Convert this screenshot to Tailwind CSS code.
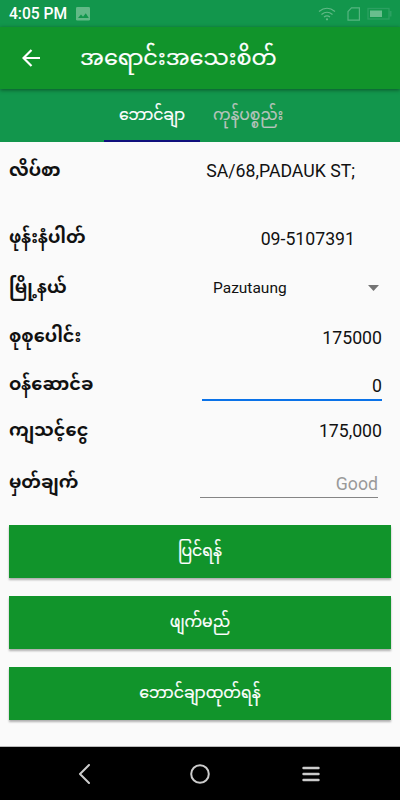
<!DOCTYPE html>
<html lang="my">
<head>
<meta charset="utf-8">
<meta name="viewport" content="width=device-width">
<title>အရောင်းအသေးစိတ်</title>
<script src="https://cdn.jsdelivr.net/npm/@tailwindcss/browser@4"></script>
</head>
<body class="w-[400px] h-[800px] overflow-hidden flex flex-col bg-[#fafafa] font-[Roboto,'Noto_Sans_Myanmar',sans-serif] text-[#111]">
  <!-- Status bar -->
  <div class="h-[27px] shrink-0 bg-[#12964c] flex items-center pl-[9px] pr-[8px] text-white">
    <span class="text-[15.6px] font-medium leading-[28px] w-[59px] whitespace-nowrap pt-px">4:05 PM</span>
    <svg class="ml-2 w-[14px] h-[14px]" viewBox="0 0 14 14"><rect width="14" height="13.5" rx="1.3" fill="#62b987"/><path d="M2 11 5 7.5l2 2.2 2.8-3.5 3 4.8z" fill="#12964c"/></svg>
    <svg class="ml-auto w-[18px] h-[14px]" viewBox="0 0 18 14" fill="none" stroke="#62b987" stroke-width="1.2"><path d="M1 4.5q8-6.500 16 0M3.500 7.500q5.500-4.500 11 0M6 10q3-2.300 6 0"/><circle cx="9" cy="12.300" r="1.100" fill="#62b987" stroke="none"/></svg>
    <svg class="ml-[11px] w-[14px] h-[14px]" viewBox="0 0 14 14" fill="none" stroke="#55b580" stroke-width="1.200"><path d="M4.500.8H12.400V13.200H1V4.500z"/></svg>
    <svg class="ml-[6px] w-[25px] h-[14px]" viewBox="0 0 25 14"><rect x="1" y="1.500" width="21" height="10.500" fill="none" stroke="#2ba061" stroke-width="1.300"/><rect x="22.500" y="4" width="2" height="5.500" fill="#2ba061"/><rect x="3" y="3.500" width="12" height="6.500" fill="#69bd8d"/></svg>
  </div>
  <!-- Toolbar -->
  <header class="relative z-10 h-[62px] shrink-0 bg-[#11942b] flex items-center pl-[22px] text-white shadow-[0_1px_4px_rgba(0,0,0,0.45)]">
    <svg class="w-[18px] h-[18px]" viewBox="0 0 18 18" fill="none" stroke="#fff" stroke-width="2.200"><path d="M18 9H2M9.500 1 1.500 9l8 8"/></svg>
    <h1 class="ml-[40px] pb-[2px] text-[22.400px] leading-[58px] whitespace-nowrap [-webkit-text-stroke:0.200px_white]">အရောင်းအသေးစိတ်</h1>
  </header>
  <!-- Tabs -->
  <nav class="h-[53px] shrink-0 bg-[#12964c] flex pl-[104px] text-[15.600px] leading-[52px]">
    <div class="w-[96px] text-center text-white border-b-2 border-[#10107c] [-webkit-text-stroke:0.200px_white]">ဘောင်ချာ</div>
    <div class="w-[96px] text-center text-[#b9c4bd] [-webkit-text-stroke:0.200px_#b9c4bd]">ကုန်ပစ္စည်း</div>
  </nav>
  <!-- Form -->
  <main class="grow flex flex-col px-[9px] text-[17.700px]">
    <div class="mt-[9px] h-10 flex items-center justify-between pr-[36px]"><span class="font-bold leading-[38px] pb-[2px]">လိပ်စာ</span><span>SA/68,PADAUK ST;</span></div>
    <div class="mt-[27px] h-10 flex items-center justify-between pr-[36px]"><span class="font-bold leading-[38px] pb-[2px]">ဖုန်းနံပါတ်</span><span class="pt-[2px]">09-5107391</span></div>
    <div class="mt-[10px] h-10 flex items-center pr-3"><span class="w-[204px] font-bold leading-[38px] pb-[3px]">မြို့နယ်</span><span class="pt-[2px] text-[15.500px]">Pazutaung</span><svg class="ml-auto w-[11px] h-[6px]" viewBox="0 0 11 6"><path d="M0 0h11L5.500 6z" fill="#747474"/></svg></div>
    <div class="mt-[9px] h-10 flex items-center justify-between pr-[9px]"><span class="font-bold leading-[38px] pb-[2px]">စုစုပေါင်း</span><span class="pt-[2px]">175000</span></div>
    <div class="mt-[8px] h-10 flex items-center justify-between pr-[9px]"><span class="font-bold leading-[38px] pb-[2px]">ဝန်ဆောင်ခ</span><span class="w-[180px] h-[36px] self-start leading-[43px] text-right border-b-2 border-[#0a72e8]">0</span></div>
    <div class="mt-[5px] h-10 flex items-center justify-between pr-[9px]"><span class="font-bold leading-10">ကျသင့်ငွေ</span><span class="pt-[2px]">175,000</span></div>
    <div class="mt-[13px] h-10 flex items-center justify-between pr-[13px]"><span class="font-bold leading-[38px] pb-[2px]">မှတ်ချက်</span><span class="w-[178px] h-[35px] self-start leading-[42px] text-right text-[#999] border-b border-[#858585]">Good</span></div>
    <div class="mt-[22px] flex flex-col gap-[18px] text-white text-[15.700px] leading-[51px] [-webkit-text-stroke:0.200px_white]">
      <button class="h-[53px] pb-[2px] bg-[#11942b] shadow-[0_2px_2px_rgba(0,0,0,0.3)]">ပြင်ရန်</button>
      <button class="h-[53px] pb-[2px] bg-[#11942b] shadow-[0_2px_2px_rgba(0,0,0,0.3)]">ဖျက်မည်</button>
      <button class="h-[53px] pb-[2px] bg-[#11942b] shadow-[0_2px_2px_rgba(0,0,0,0.3)]">ဘောင်ချာထုတ်ရန်</button>
    </div>
  </main>
  <!-- System navigation -->
  <footer class="h-[54px] shrink-0 bg-black border-t border-[#bbb] flex items-center pl-[78px]">
    <svg class="w-[12px] h-[20px]" viewBox="0 0 12 20" fill="none" stroke="#ccc" stroke-width="2" stroke-linecap="round" stroke-linejoin="round"><path d="M11 1 2 10l9 9"/></svg>
    <svg class="ml-[100px] w-[20px] h-[20px]" viewBox="0 0 20 20" fill="none" stroke="#ccc" stroke-width="2"><circle cx="10" cy="10" r="8.800"/></svg>
    <svg class="ml-[92px] w-[18px] h-[16px]" viewBox="0 0 18 16" stroke="#ccc" stroke-width="2.400" stroke-linecap="round"><path d="M1.500 2h15M1.500 8h15M1.500 14h15"/></svg>
  </footer>
</body>
</html>
